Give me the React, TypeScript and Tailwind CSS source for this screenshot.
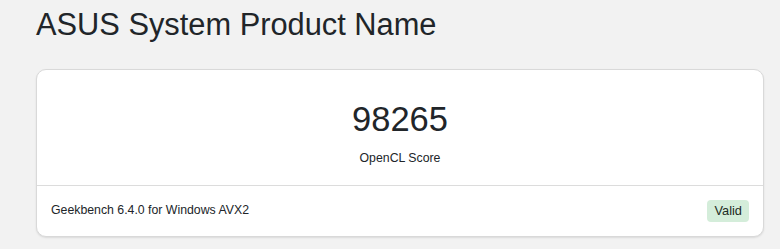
const SANS = "font-['Liberation_Sans',Arial,sans-serif]";

export default function App() {
  return (
    <div className={`min-h-screen bg-[#f2f2f2] px-[36px] pt-[7px] ${SANS} text-[#212529]`}>
      <h1 className="text-[30.8px] leading-[36px] font-normal">ASUS System Product Name</h1>
      <div className="mt-[26px] w-[728px] rounded-[10px] border border-[#d9d9d9] bg-white shadow-[0_1px_2px_rgba(0,0,0,0.1)]">
        <div className="flex flex-col items-center pt-[29px] pb-[18px]">
          <div className="text-[34.5px] leading-[41px]">98265</div>
          <div className="mt-[9px] text-[12.3px] leading-[18px]">OpenCL Score</div>
        </div>
        <div className="flex h-[51px] items-center justify-between border-t border-[#dcdcdc] pl-[14px] pr-[14px]">
          <span className="mb-[3px] text-[12.3px] leading-[18px]">Geekbench 6.4.0 for Windows AVX2</span>
          <span className="rounded-[4px] bg-[#d4edda] px-[7px] py-[2px] text-[12.8px] leading-[18px] text-[#1d2b24]">
            Valid
          </span>
        </div>
      </div>
    </div>
  );
}
